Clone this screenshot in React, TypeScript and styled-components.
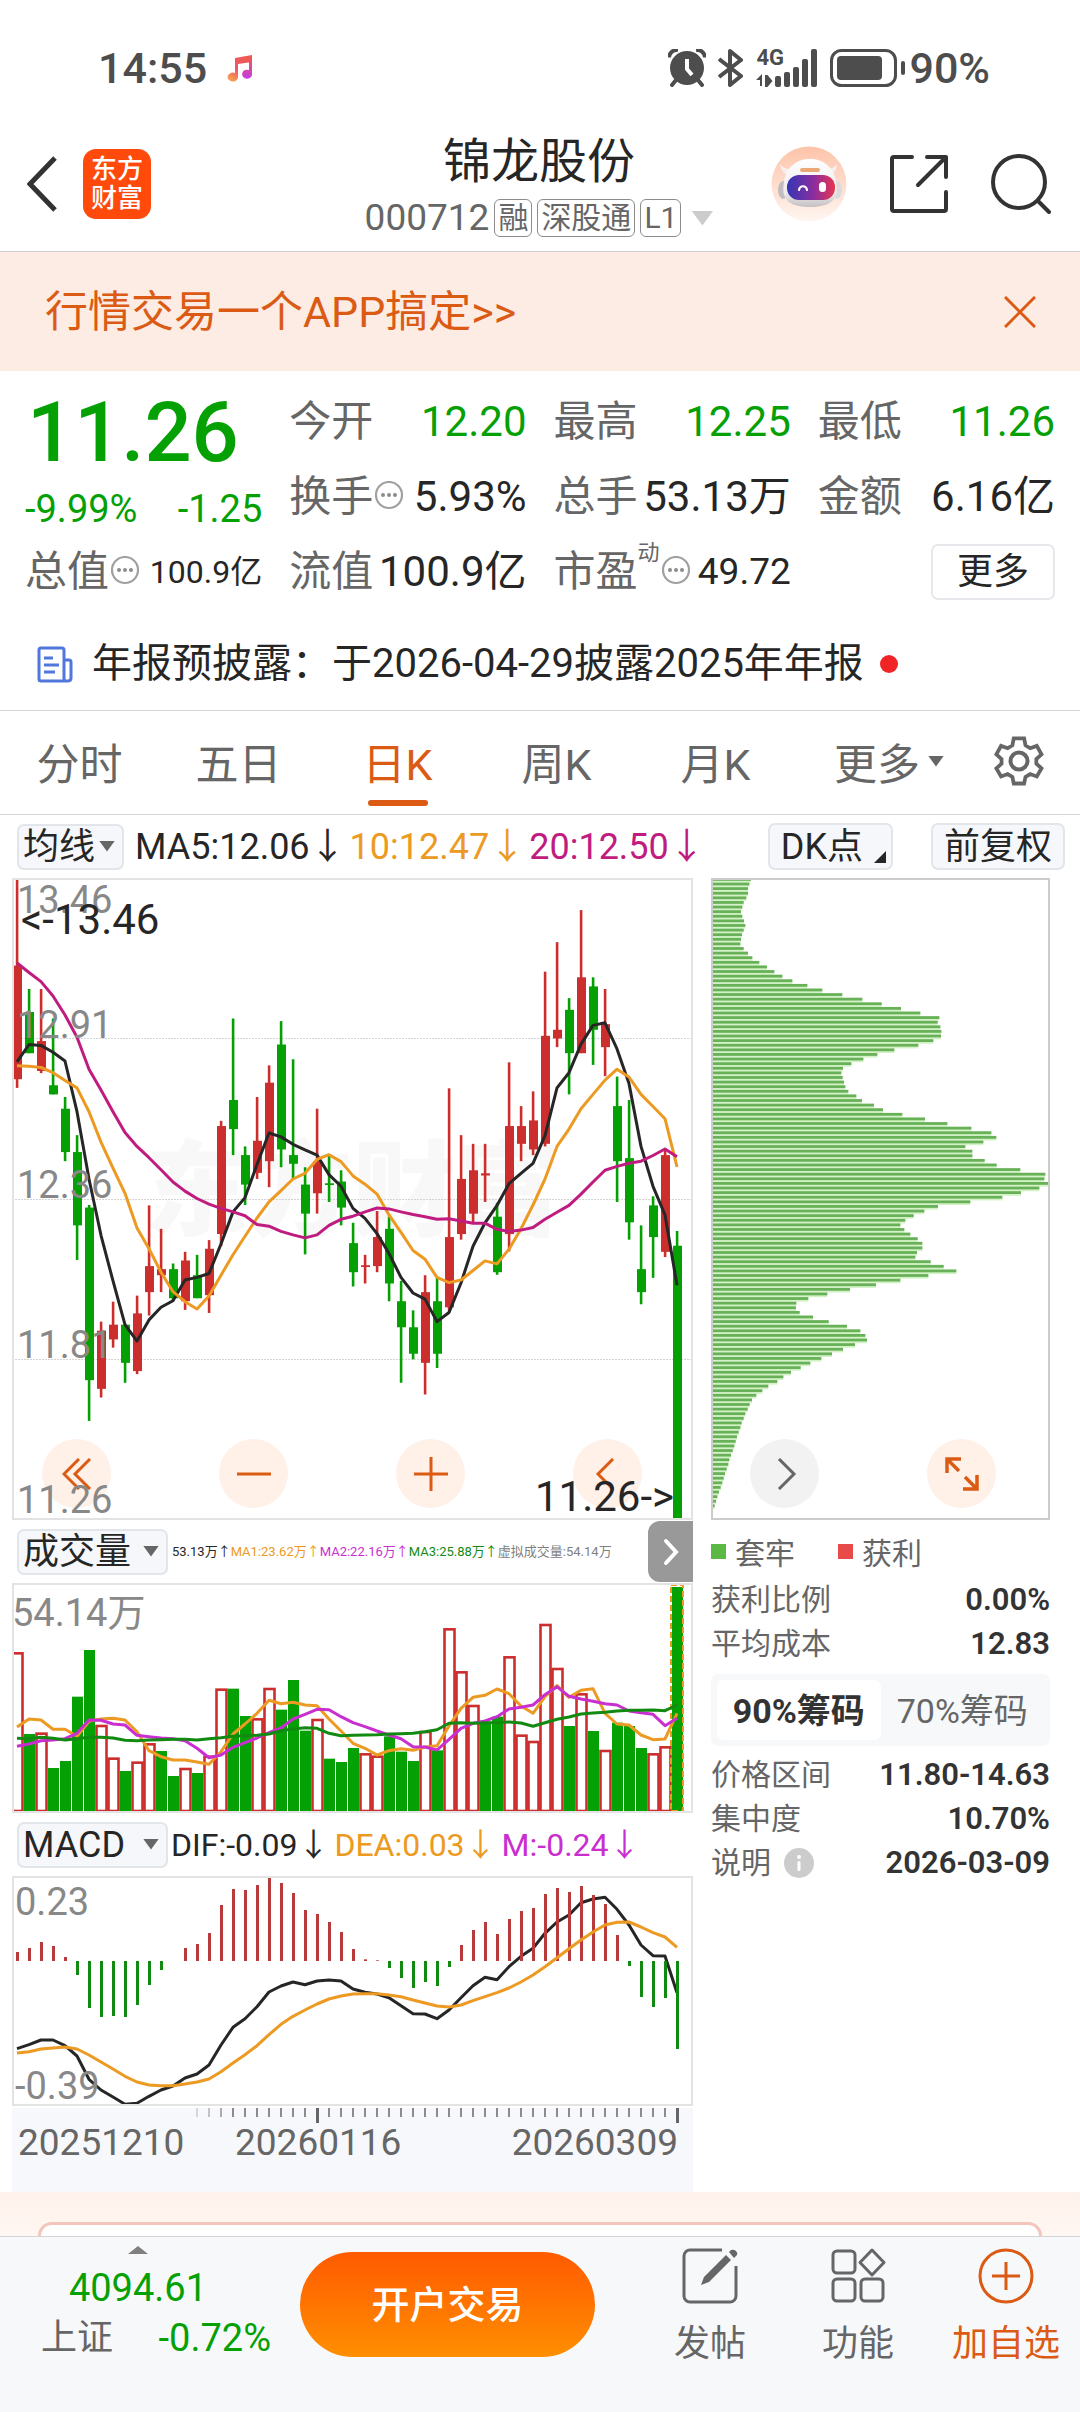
import React from "react";
import styled, { createGlobalStyle } from "styled-components";

const UP = "#cc2e2e";
const DOWN = "#04a004";
const ORANGE = "#ec9a22";
const BRAND = "#db5a14";
const MAGENTA = "#c01c80";
const PURPLE = "#c92fd0";
const INK = "#262626";
const GREY = "#666666";

const GlobalStyle = createGlobalStyle`
  *, *::before, *::after { box-sizing: border-box; }
  body { margin: 0; background: #ffffff; }
  body, button, select {
    font-family: Roboto, "Noto Sans CJK SC", sans-serif;
    color: ${INK};
  }
  button { border: 0; padding: 0; background: none; cursor: pointer; white-space: nowrap; }
  svg { display: block; flex: none; }
  dl, dd, dt, h1, p { margin: 0; font-weight: 400; }
`;

const Page = styled.div`
  display: flex;
  flex-direction: column;
  min-height: 100vh;
`;

/* ---------- status bar ---------- */
const StatusBar = styled.div`
  display: flex;
  align-items: center;
  justify-content: space-between;
  height: 110px;
  padding: 26px 90px 0 98px;
  color: #4d4d4d;
  font-size: 43px;
  font-weight: 500;
`;
const StatusGroup = styled.div<{ $gap: number }>`
  display: flex;
  align-items: center;
  gap: ${(p) => p.$gap}px;
`;
const NetworkIcon = styled.div`
  position: relative;
  display: flex;
`;
const NetworkLabel = styled.span`
  position: absolute;
  left: 0;
  top: -3px;
  font-size: 22px;
  line-height: 24px;
  font-weight: 700;
`;

/* ---------- header ---------- */
const Header = styled.header`
  display: grid;
  grid-template-columns: 1fr auto 1fr;
  align-items: center;
  height: 142px;
  padding: 0 29px 0 27px;
  border-bottom: 1px solid #d0d0d3;
`;
const HeaderSide = styled.div<{ $end?: boolean }>`
  display: flex;
  align-items: center;
  justify-content: ${(p) => (p.$end ? "flex-end" : "flex-start")};
  gap: ${(p) => (p.$end ? 42 : 26)}px;
  padding-top: 6px;
`;
const IconButton = styled.button`
  display: flex;
`;
const Logo = styled.div`
  width: 68px;
  height: 70px;
  padding-top: 6px;
  border-radius: 13px;
  background: #ff4a0b;
  color: #ffffff;
  font-size: 26px;
  line-height: 29px;
  font-weight: 500;
  text-align: center;
`;
const TitleBlock = styled.div`
  display: flex;
  flex-direction: column;
  align-items: center;
  padding-top: 15px;
`;
const Title = styled.h1`
  font-size: 48px;
  line-height: 60px;
`;
const SubTitle = styled.button`
  display: flex;
  align-items: center;
  gap: 5px;
  color: ${GREY};
  font-size: 37px;
  line-height: 52px;
`;
const Tag = styled.span`
  padding: 0 3px;
  border: 1px solid #8c8c8c;
  border-radius: 6px;
  font-size: 30px;
  line-height: 36px;
`;
const Caret = styled.span<{ $size: number; $color?: string; $up?: boolean }>`
  display: inline-block;
  flex: none;
  width: ${(p) => p.$size * 2}px;
  height: ${(p) => Math.round(p.$size * 1.4)}px;
  background: ${(p) => p.$color || GREY};
  clip-path: ${(p) => (p.$up ? "polygon(50% 0, 100% 100%, 0 100%)" : "polygon(0 0, 100% 0, 50% 100%)")};
`;
const TitleCaret = styled(Caret)`
  margin-left: 5px;
`;

/* ---------- banner ---------- */
const Banner = styled.div`
  display: flex;
  align-items: center;
  justify-content: space-between;
  height: 119px;
  padding: 0 44px 0 45px;
  background: #fcece3;
`;
const BannerLink = styled.a`
  color: ${BRAND};
  font-size: 43px;
  line-height: 60px;
  text-decoration: none;
`;

/* ---------- quote ---------- */
const Quote = styled.section`
  display: grid;
  grid-template-columns: repeat(4, 1fr);
  grid-template-rows: repeat(3, 75px);
  column-gap: 27px;
  padding: 13px 25px 9px;
`;
const PriceCell = styled.div`
  grid-row: span 2;
  color: ${DOWN};
`;
const Price = styled.div`
  padding-left: 2px;
  font-size: 83px;
  line-height: 98px;
  font-weight: 500;
`;
const Change = styled.div`
  display: flex;
  justify-content: space-between;
  font-size: 38px;
  line-height: 54px;
`;
const Cell = styled.dl`
  display: flex;
  align-items: center;
  justify-content: space-between;
  white-space: nowrap;
`;
const CellLabel = styled.dt`
  display: flex;
  align-items: center;
  color: ${GREY};
  font-size: 42px;
  line-height: 60px;
`;
const CellValue = styled.dd<{ $tone?: string; $size?: number }>`
  color: ${(p) => p.$tone || INK};
  font-size: ${(p) => p.$size || 42}px;
  line-height: 60px;
`;
const Superscript = styled.sup`
  align-self: flex-start;
  font-size: 22px;
  line-height: 22px;
`;
const MoreButton = styled.button`
  align-self: center;
  justify-self: end;
  width: 124px;
  height: 56px;
  border: 2px solid #e6e8eb;
  border-radius: 7px;
  font-size: 36px;
  line-height: 50px;
`;

/* ---------- news ---------- */
const News = styled.a`
  display: flex;
  align-items: center;
  height: 92px;
  padding-left: 37px;
  color: ${INK};
  font-size: 40px;
  line-height: 60px;
  white-space: nowrap;
  text-decoration: none;
`;
const NewsText = styled.span`
  margin: 0 16px 0 19px;
`;
const Dot = styled.span`
  width: 18px;
  height: 18px;
  border-radius: 50%;
  background: #f02424;
`;

/* ---------- tabs ---------- */
const Tabs = styled.nav`
  display: grid;
  grid-template-columns: repeat(5, 159fr) 188fr 72fr;
  height: 105px;
  padding-right: 25px;
  border-top: 1px solid #d6d6d8;
  border-bottom: 1px solid #d6d6d8;
`;
const Tab = styled.button<{ $active?: boolean }>`
  position: relative;
  display: flex;
  align-items: center;
  justify-content: center;
  gap: 8px;
  padding-bottom: 3px;
  color: ${(p) => (p.$active ? BRAND : GREY)};
  font-size: 43px;
  &::after {
    content: "";
    position: absolute;
    left: 50%;
    bottom: 8px;
    width: 60px;
    height: 6px;
    margin-left: -30px;
    border-radius: 3px;
    background: ${(p) => (p.$active ? BRAND : "transparent")};
  }
`;

/* ---------- indicator rows ---------- */
const MaRow = styled.div`
  display: flex;
  align-items: center;
  height: 63px;
  padding: 0 15px 0 17px;
`;
const SelectBox = styled.label<{ $width: number }>`
  position: relative;
  display: flex;
  align-items: center;
  width: ${(p) => p.$width}px;
  height: 46px;
  flex: none;
`;
const Select = styled.select`
  appearance: none;
  width: 100%;
  height: 100%;
  padding: 0 0 0 4px;
  border: 2px solid #e2e5e9;
  border-radius: 7px;
  background: #f6f7fa;
  font-size: 36px;
  line-height: 42px;
`;
const SelectCaret = styled(Caret)`
  position: absolute;
  right: 9px;
  top: 17px;
  pointer-events: none;
`;
const Readouts = styled.div<{ $size: number; $gap: number; $pad: number }>`
  display: flex;
  gap: ${(p) => p.$gap}px;
  padding-left: ${(p) => p.$pad}px;
  font-size: ${(p) => p.$size}px;
  line-height: 50px;
  white-space: nowrap;
`;
const Readout = styled.span<{ $color: string }>`
  color: ${(p) => p.$color};
`;
const Actions = styled.div`
  display: flex;
  gap: 38px;
  margin-left: auto;
`;
const Chip = styled.button<{ $corner?: boolean }>`
  position: relative;
  height: 47px;
  padding: 0 ${(p) => (p.$corner ? 28 : 11)}px 0 11px;
  border: 2px solid #e2e5e9;
  border-radius: 7px;
  background: #f6f7fa;
  font-size: 36px;
  line-height: 42px;
  &::after {
    content: "";
    position: absolute;
    right: 5px;
    bottom: 5px;
    width: 12px;
    height: 12px;
    background: ${(p) => (p.$corner ? INK : "transparent")};
    clip-path: polygon(100% 0, 100% 100%, 0 100%);
  }
`;
const SubRow = styled.div`
  display: flex;
  align-items: center;
  height: 63px;
  padding-left: 5px;
`;
const NextButton = styled.button`
  display: flex;
  align-items: center;
  justify-content: center;
  width: 45px;
  height: 61px;
  margin-left: auto;
  border-radius: 12px 0 0 12px;
  background: #999999;
`;

/* ---------- charts ---------- */
const Board = styled.main`
  display: grid;
  grid-template-columns: 681fr 339fr;
  column-gap: 18px;
  padding: 0 30px 0 12px;
`;
const Column = styled.div`
  min-width: 0;
`;
const Panel = styled.div<{ $height: number; $dark?: boolean }>`
  position: relative;
  height: ${(p) => p.$height}px;
  overflow: hidden;
  &::after {
    content: "";
    position: absolute;
    inset: 0;
    border: 2px solid ${(p) => (p.$dark ? "#cccccc" : "#e3e3e3")};
    pointer-events: none;
  }
`;
const Plot = styled.svg`
  position: relative;
  width: 100%;
  height: 100%;
`;
const Watermark = styled.div`
  position: absolute;
  inset: 0;
  display: flex;
  align-items: center;
  justify-content: center;
  color: #f8f8f8;
  font-size: 104px;
  line-height: 120px;
  padding-bottom: 12px;
  font-weight: 900;
`;
const AxisLabel = styled.span<{ $top: number; $left?: number }>`
  position: absolute;
  left: ${(p) => p.$left ?? 5}px;
  top: ${(p) => p.$top}px;
  color: #888888;
  font-size: 38px;
  line-height: 36px;
`;
const Callout = styled.span<{ $top: number; $right?: boolean }>`
  position: absolute;
  top: ${(p) => p.$top}px;
  ${(p) => (p.$right ? "right: 19px;" : "left: 9px;")}
  font-size: 42px;
  line-height: 40px;
`;
const RoundRow = styled.div<{ $left: number }>`
  position: absolute;
  left: ${(p) => p.$left}px;
  bottom: 12px;
  display: flex;
  gap: 108px;
`;
const Round = styled.button<{ $grey?: boolean }>`
  display: flex;
  align-items: center;
  justify-content: center;
  width: 69px;
  height: 69px;
  border-radius: 50%;
  background: ${(p) => (p.$grey ? "#f2f2f2" : "rgba(255, 238, 228, 0.86)")};
  color: ${(p) => (p.$grey ? GREY : BRAND)};
`;
const DateAxis = styled.div`
  position: relative;
  height: 84px;
  margin-top: 2px;
  background: #f7f8fb;
`;
const Ticks = styled.svg`
  width: 100%;
  height: 16px;
`;
const Dates = styled.div`
  display: grid;
  grid-template-columns: 217px 1fr auto;
  padding: 0 15px 0 6px;
  color: ${GREY};
  font-size: 37px;
  line-height: 38px;
`;

/* ---------- chip statistics ---------- */
const Legend = styled.div`
  display: flex;
  align-items: center;
  gap: 43px;
  height: 58px;
  padding-top: 4px;
  color: ${GREY};
  font-size: 30px;
`;
const LegendItem = styled.span<{ $color: string }>`
  display: flex;
  align-items: center;
  gap: 9px;
  &::before {
    content: "";
    width: 15px;
    height: 15px;
    background: ${(p) => p.$color};
  }
`;
const Stats = styled.dl``;
const Stat = styled.div`
  display: flex;
  align-items: center;
  justify-content: space-between;
  height: 44px;
  white-space: nowrap;
`;
const StatLabel = styled.dt`
  display: flex;
  align-items: center;
  gap: 13px;
  color: ${GREY};
  font-size: 30px;
  line-height: 44px;
`;
const StatValue = styled.dd`
  color: #333333;
  font-size: 31px;
  line-height: 44px;
  font-weight: 600;
`;
const Segmented = styled.div`
  display: grid;
  grid-template-columns: 1fr 1fr;
  height: 72px;
  margin: 8px 0 7px;
  padding: 6px;
  border-radius: 7px;
  background: #f7f8fa;
`;
const Segment = styled.button<{ $active?: boolean }>`
  padding-bottom: 3px;
  border-radius: 7px;
  background: ${(p) => (p.$active ? "#ffffff" : "transparent")};
  color: ${(p) => (p.$active ? "#333333" : GREY)};
  font-size: 34px;
  font-weight: ${(p) => (p.$active ? 700 : 400)};
`;

/* ---------- bottom ---------- */
const Promo = styled.div`
  flex: 1 0 44px;
  display: flex;
  padding: 30px 38px 0;
  background: linear-gradient(#fff2ec, #fff7f2);
`;
const PromoCard = styled.div`
  flex: 1;
  border: 3px solid #f4c6bb;
  border-bottom: 0;
  border-radius: 20px 20px 0 0;
  background: #ffffff;
`;
const BottomBar = styled.footer`
  display: flex;
  align-items: flex-start;
  height: 176px;
  padding: 0 0 0 26px;
  border-top: 1px solid #d3d3d8;
  background: #f7f8fa;
`;
const IndexBlock = styled.button`
  flex: 0 0 258px;
  padding: 9px 13px 0 15px;
  color: ${DOWN};
`;
const IndexHead = styled.span`
  display: flex;
  flex-direction: column;
  align-items: center;
  padding: 0 36px 0 0;
  font-size: 38px;
  line-height: 46px;
`;
const IndexCaret = styled(Caret)`
  height: 8px;
  margin-bottom: 11px;
`;
const IndexRow = styled.span`
  display: flex;
  justify-content: space-between;
  padding-top: 2px;
  font-size: 38px;
  line-height: 50px;
`;
const IndexName = styled.span`
  color: ${GREY};
  font-size: 36px;
`;
const Cta = styled.button`
  flex: 0 0 295px;
  height: 105px;
  margin: 15px 0 0 16px;
  border-radius: 53px;
  background: linear-gradient(#ff5a00, #ff8f00);
  color: #ffffff;
  font-size: 38px;
  line-height: 50px;
  font-weight: 500;
`;
const Tools = styled.nav`
  display: flex;
  justify-content: flex-end;
  flex: 1;
`;
const Tool = styled.button<{ $accent?: boolean }>`
  display: flex;
  flex-direction: column;
  align-items: center;
  width: 148px;
  padding-top: 11px;
  color: ${(p) => (p.$accent ? BRAND : GREY)};
  font-size: 36px;
  line-height: 46px;
`;
const ToolLabel = styled.span`
  padding-top: 17px;
`;

/* ---------- data ---------- */
// direction, body top, body bottom, high, low — measured downwards on a 1478-unit scale offset by 41
type Candle = [0 | 1, number, number, number, number];
const candles: Candle[] = [
  [1, 243, 505, 41, 525], [0, 350, 445, 297, 445], [1, 417, 486, 297, 491], [0, 519, 540, 365, 540],
  [0, 573, 673, 546, 694], [0, 673, 842, 634, 922], [0, 801, 1199, 795, 1293], [1, 1085, 1219, 1064, 1239],
  [1, 1071, 1105, 1018, 1124], [0, 1071, 1159, 1071, 1205], [1, 1045, 1178, 1004, 1185], [1, 936, 996, 796, 1050],
  [1, 943, 957, 850, 996], [0, 943, 1010, 930, 1017], [1, 923, 1017, 903, 1037], [0, 957, 1010, 910, 1010],
  [1, 896, 1003, 876, 1044], [1, 613, 862, 601, 890], [0, 553, 620, 365, 680], [0, 680, 748, 660, 795],
  [1, 647, 721, 546, 735], [1, 513, 694, 473, 754], [0, 425, 667, 371, 708], [0, 680, 700, 459, 735],
  [0, 748, 815, 708, 909], [1, 694, 768, 573, 815], [0, 745, 749, 680, 788], [0, 741, 801, 715, 842],
  [0, 883, 950, 836, 983], [1, 934, 938, 910, 976], [1, 869, 936, 809, 950], [0, 850, 976, 822, 1017],
  [0, 1017, 1077, 970, 1205], [0, 1077, 1138, 1038, 1151], [1, 996, 1159, 957, 1232], [0, 1017, 1138, 960, 1171],
  [1, 869, 1031, 526, 1040], [1, 735, 862, 634, 875], [1, 715, 815, 654, 835], [1, 722, 727, 654, 788],
  [0, 822, 950, 790, 956], [1, 613, 862, 466, 902], [1, 613, 654, 567, 694], [1, 600, 667, 533, 680],
  [1, 405, 654, 257, 660], [1, 391, 411, 189, 431], [0, 345, 445, 318, 540], [1, 270, 445, 115, 445],
  [0, 291, 391, 270, 472], [1, 378, 431, 297, 498], [0, 567, 694, 499, 788], [0, 687, 835, 553, 875],
  [0, 943, 996, 842, 1024], [0, 796, 869, 775, 963], [1, 680, 903, 665, 915], [0, 889, 1522, 855, 1522],
];
const ma5 = [465, 425, 427, 443, 463, 580, 735, 865, 970, 1071, 1109, 1060, 1031, 1016, 968, 962, 953, 885, 811, 778, 702, 629, 638, 655, 668, 680, 725, 752, 803, 826, 861, 907, 962, 998, 1012, 1064, 1043, 975, 890, 836, 796, 746, 722, 699, 635, 525, 490, 424, 381, 375, 435, 515, 660, 752, 818, 980];
const ma10 = [474, 475, 478, 490, 508, 525, 580, 650, 710, 768, 848, 896, 950, 995, 1018, 1035, 1005, 957, 910, 867, 825, 788, 762, 735, 722, 690, 679, 695, 728, 747, 770, 818, 858, 900, 920, 962, 974, 968, 946, 924, 931, 897, 850, 795, 735, 660, 620, 573, 540, 507, 482, 500, 540, 568, 596, 707];
const ma20 = [237, 259, 280, 313, 357, 408, 482, 530, 580, 628, 660, 686, 714, 742, 763, 780, 793, 803, 811, 820, 840, 844, 856, 864, 871, 864, 842, 828, 821, 811, 802, 804, 811, 817, 822, 828, 827, 832, 837, 837, 851, 856, 853, 847, 828, 812, 796, 770, 742, 715, 706, 699, 694, 681, 666, 684];

// bar tops on a 3-units-per-pixel scale, panel top at 249 and base line at 933
const volumes = [457, 702, 698, 804, 783, 590, 450, 675, 773, 813, 785, 730, 753, 828, 804, 819, 767, 566, 566, 648, 655, 564, 629, 540, 692, 657, 776, 786, 744, 760, 767, 709, 755, 783, 693, 751, 385, 514, 615, 665, 650, 469, 704, 723, 372, 504, 678, 580, 693, 750, 668, 678, 744, 760, 739, 261];
const volumeUpDays = new Set([0, 2, 7, 8, 10, 11, 14, 16, 17, 20, 21, 25, 29, 30, 34, 36, 37, 38, 41, 42, 43, 44, 45, 47, 49, 53, 54]);
const vol1 = [681, 657, 660, 688, 688, 709, 664, 657, 655, 660, 695, 752, 770, 780, 780, 786, 793, 755, 702, 672, 640, 601, 611, 607, 615, 617, 657, 693, 730, 745, 765, 752, 746, 751, 741, 737, 678, 625, 592, 586, 567, 581, 618, 640, 590, 557, 592, 571, 566, 640, 672, 675, 705, 719, 717, 640];
const vol2 = [739, 732, 722, 720, 716, 700, 660, 661, 672, 675, 706, 710, 714, 716, 722, 745, 773, 765, 742, 728, 714, 698, 684, 657, 643, 628, 629, 650, 668, 680, 693, 705, 716, 740, 741, 750, 718, 685, 670, 663, 650, 627, 622, 615, 584, 560, 589, 597, 604, 611, 615, 633, 638, 643, 677, 655];
const vol3 = [715, 716, 712, 715, 720, 716, 712, 712, 714, 721, 722, 720, 719, 718, 718, 720, 716, 713, 709, 707, 706, 702, 692, 687, 683, 685, 700, 707, 706, 705, 704, 702, 701, 700, 695, 689, 670, 668, 670, 668, 668, 666, 669, 679, 668, 658, 651, 642, 639, 637, 633, 631, 631, 630, 632, 615];

// same scale, panel top at 228 and zero line at 483
const macd = [456, 444, 426, 438, 471, 525, 624, 651, 648, 651, 615, 555, 510, 483, 444, 432, 399, 315, 267, 270, 255, 228, 249, 279, 330, 342, 366, 396, 447, 478, 481, 504, 534, 564, 546, 558, 501, 435, 390, 366, 402, 357, 333, 324, 282, 264, 276, 258, 285, 312, 405, 498, 591, 621, 594, 747];
const dif = [746, 734, 720, 720, 737, 768, 838, 870, 891, 913, 910, 889, 870, 858, 834, 822, 795, 735, 682, 656, 620, 576, 558, 546, 554, 543, 540, 543, 567, 577, 582, 593, 617, 641, 642, 656, 630, 593, 557, 532, 539, 500, 469, 445, 400, 366, 345, 308, 297, 292, 328, 375, 435, 467, 468, 578];
const dea = [759, 755, 747, 744, 741, 747, 765, 786, 807, 829, 846, 855, 857, 857, 852, 846, 837, 815, 789, 764, 737, 704, 673, 649, 630, 612, 597, 588, 582, 581, 581, 585, 590, 600, 609, 618, 621, 615, 602, 590, 578, 564, 546, 525, 500, 473, 446, 420, 396, 375, 367, 366, 381, 398, 411, 442];

// chip distribution, length of each price level (full width = 1018)
const chips = [182, 177, 173, 173, 168, 160, 156, 152, 156, 161, 165, 160, 155, 152, 150, 160, 173, 186, 207, 230, 252, 276, 306, 351, 396, 456, 516, 574, 632, 690, 747, 742, 750, 753, 752, 729, 684, 612, 561, 519, 483, 458, 453, 457, 461, 465, 474, 498, 515, 551, 578, 636, 704, 771, 843, 903, 918, 879, 825, 846, 846, 883, 919, 990, 1065, 1062, 1080, 1047, 992, 936, 840, 743, 702, 670, 645, 630, 642, 660, 682, 696, 696, 680, 675, 721, 760, 798, 714, 630, 557, 479, 411, 354, 318, 317, 328, 368, 415, 470, 510, 525, 530, 494, 458, 425, 393, 360, 331, 302, 279, 261, 234, 216, 198, 185, 178, 172, 165, 160, 154, 150, 145, 140, 136, 132, 127, 122, 117, 114, 109, 104, 100, 96, 91, 86, 81, 77, 73, 68].map((v) => (v - 62) / 3);

const STEP = 12;
const cx = (i: number) => 5 + i * STEP;
const priceY = (v: number) => (v - 41) / 2.306;
const line = (values: number[], toY: (v: number) => number) =>
  values.map((v, i) => `${cx(i)},${toY(v).toFixed(1)}`).join(" ");

const Curve = ({ values, toY, color }: { values: number[]; toY: (v: number) => number; color: string }) => (
  <polyline points={line(values, toY)} fill="none" stroke={color} strokeWidth="3" strokeLinejoin="round" />
);

const PriceChart = () => (
  <Panel $height={642}>
    <Watermark aria-hidden>东方财富</Watermark>
    <Plot viewBox="0 0 681 642" preserveAspectRatio="none">
      {[160, 321, 481].map((y) => (
        <line key={y} x1="0" x2="681" y1={y + 0.5} y2={y + 0.5} stroke="#d4d4d4" strokeDasharray="2 1" />
      ))}
      {candles.map(([up, top, bottom, high, low], i) => (
        <g key={i} fill={up ? UP : DOWN}>
          <rect x={cx(i) - 1.2} y={priceY(high)} width="2.6" height={priceY(low) - priceY(high)} />
          <rect x={cx(i) - 4} y={priceY(top)} width="9" height={priceY(bottom) - priceY(top)} />
        </g>
      ))}
      <Curve values={ma5} toY={priceY} color={INK} />
      <Curve values={ma10} toY={priceY} color={ORANGE} />
      <Curve values={ma20} toY={priceY} color={MAGENTA} />
    </Plot>
    <RoundRow $left={30}>
      <Round aria-label="最早">
        <svg width="30" height="32" viewBox="0 0 30 32" fill="none" stroke="currentColor" strokeWidth="3">
          <path d="M17 1L2 16l15 15M28 1L13 16l15 15" />
        </svg>
      </Round>
      <Round aria-label="缩小">
        <svg width="34" height="34" viewBox="0 0 34 34" stroke="currentColor" strokeWidth="3"><path d="M0 17h34" /></svg>
      </Round>
      <Round aria-label="放大">
        <svg width="34" height="34" viewBox="0 0 34 34" stroke="currentColor" strokeWidth="3"><path d="M0 17h34M17 0v34" /></svg>
      </Round>
      <Round aria-label="向前">
        <svg width="30" height="32" viewBox="0 0 30 32" fill="none" stroke="currentColor" strokeWidth="3">
          <path d="M20 1L5 16l15 15" />
        </svg>
      </Round>
    </RoundRow>
    <AxisLabel $top={4}>13.46</AxisLabel>
    <AxisLabel $top={129}>12.91</AxisLabel>
    <AxisLabel $top={289}>12.36</AxisLabel>
    <AxisLabel $top={449}>11.81</AxisLabel>
    <AxisLabel $top={604}>11.26</AxisLabel>
    <Callout $top={22}>&lt;-13.46</Callout>
    <Callout $top={599} $right>11.26-&gt;</Callout>
  </Panel>
);

const volumeY = (v: number) => (v - 249) / 3;
const VolumeChart = () => (
  <Panel $height={230}>
    <Plot viewBox="0 0 681 230" preserveAspectRatio="none">
      {volumes.map((v, i) => {
        const y = volumeY(v);
        if (volumeUpDays.has(i)) {
          return <rect key={i} x={cx(i) - 4.5} y={y + 1} width="10" height={227 - y} fill="#ffffff" stroke={UP} strokeWidth="2.6" />;
        }
        return <rect key={i} x={cx(i) - 5} y={y} width="11" height={228 - y} fill={DOWN} />;
      })}
      <rect x={cx(55) - 6} y="2" width="12" height="226" fill="none" stroke={ORANGE} strokeWidth="2" strokeDasharray="6 3" />
      <Curve values={vol1} toY={volumeY} color={ORANGE} />
      <Curve values={vol2} toY={volumeY} color={PURPLE} />
      <Curve values={vol3} toY={volumeY} color="#128a12" />
    </Plot>
    <AxisLabel $top={12} $left={0}>54.14万</AxisLabel>
  </Panel>
);

const macdY = (v: number) => (v - 228) / 3;
const MacdChart = () => (
  <Panel $height={230}>
    <Plot viewBox="0 0 681 230" preserveAspectRatio="none">
      <Curve values={dif} toY={macdY} color={INK} />
      {macd.map((v, i) => (
        <rect
          key={i}
          x={cx(i) - 1}
          y={Math.min(macdY(v), 85)}
          width="3"
          height={Math.abs(macdY(v) - 85)}
          fill={v < 483 ? "#b93a3a" : "#128a12"}
        />
      ))}
      <Curve values={dea} toY={macdY} color={ORANGE} />
    </Plot>
    <AxisLabel $top={8} $left={3}>0.23</AxisLabel>
    <AxisLabel $top={192} $left={3}>-0.39</AxisLabel>
  </Panel>
);

const ChipChart = () => (
  <Panel $height={642} $dark>
    <Plot viewBox="0 0 339 642" preserveAspectRatio="none">
      {chips.map((w, i) => (
        <g key={i}>
          <rect x="0" y={i * 4.606} width={w} height="4.6" fill="#d3f3c6" />
          <rect x="0" y={i * 4.606} width={w} height="2.8" fill="#69b159" />
        </g>
      ))}
    </Plot>
    <RoundRow $left={39}>
      <Round $grey aria-label="向后">
        <svg width="30" height="32" viewBox="0 0 30 32" fill="none" stroke="currentColor" strokeWidth="3">
          <path d="M9 1l15 15L9 31" />
        </svg>
      </Round>
      <Round aria-label="全屏">
        <svg width="34" height="34" viewBox="0 0 34 34" fill="none" stroke="currentColor" strokeWidth="3.5">
          <path d="M2 16V2h14M2 2l12 12M32 18v14H18M32 32L20 20" />
        </svg>
      </Round>
    </RoundRow>
  </Panel>
);

const TickMarks = () => (
  <Ticks viewBox="0 0 681 16" preserveAspectRatio="none">
    {candles.map((_, i) => {
      const major = i === 25 || i === 55;
      if (i < 15) return null;
      return (
        <rect
          key={i}
          x={cx(i) - 1}
          y="0"
          width={major ? 3 : 2}
          height={major ? 15 : 9}
          fill={major ? "#666666" : "#8c8c8c"}
          opacity={i < 18 ? 0.3 + (i - 15) * 0.2 : 1}
        />
      );
    })}
  </Ticks>
);

const Ellipsis = () => (
  <svg width="32" height="32" viewBox="0 0 32 32" role="img" aria-label="说明">
    <circle cx="16" cy="14" r="13" fill="none" stroke="#a0a0a0" strokeWidth="2.2" />
    <g fill="#8c8c8c"><circle cx="10" cy="14" r="2" /><circle cx="16" cy="14" r="2" /><circle cx="22" cy="14" r="2" /></g>
  </svg>
);

const MusicNote = () => (
  <svg width="26" height="28" viewBox="0 0 26 28">
    <defs>
      <linearGradient id="note" x1="0" y1="1" x2="0.7" y2="0">
        <stop offset="0" stopColor="#f8b24a" />
        <stop offset="0.5" stopColor="#f0566a" />
        <stop offset="1" stopColor="#ee5a4e" />
      </linearGradient>
      <linearGradient id="noteEnd" x1="0" y1="0" x2="0" y2="1">
        <stop offset="0" stopColor="#ee5a4e" />
        <stop offset="1" stopColor="#c53be8" />
      </linearGradient>
    </defs>
    <path d="M8 4L25 1v7L11 10v13a5.200 4.500 0 1 1-3-4z" fill="url(#note)" />
    <path d="M22 4l3-1v18a5 4.500 0 1 1-3-5z" fill="url(#noteEnd)" />
  </svg>
);

const AlarmIcon = () => (
  <svg width="38" height="38" viewBox="0 0 38 38">
    <circle cx="19" cy="19" r="17" fill="#4d4d4d" />
    <path d="M1 8.500A8 8 0 0 1 10 1M28 1a8 8 0 0 1 9 7.500" fill="none" stroke="#4d4d4d" strokeWidth="4" />
    <path d="M8 31l-4 5M30 31l4 5" stroke="#4d4d4d" strokeWidth="4" strokeLinecap="round" />
    <path d="M19 10v10l5 6" fill="none" stroke="#ffffff" strokeWidth="4" />
  </svg>
);

const BluetoothIcon = () => (
  <svg width="26" height="38" viewBox="0 0 26 38" fill="none" stroke="#4d4d4d" strokeWidth="4" strokeLinejoin="round">
    <path d="M1 10l22 17-11 9V2l11 9L1 28" />
  </svg>
);

const SignalIcon = () => (
  <svg width="62" height="38" viewBox="0 0 62 38" fill="#4d4d4d">
    <path d="M0 31l6-6v12H4v-6zM9 26h2.500l5 6-5 6H9z" />
    <rect x="19" y="27" width="6" height="11" rx="2" />
    <rect x="28" y="23" width="6" height="15" rx="2" />
    <rect x="37" y="18" width="6" height="20" rx="2" />
    <rect x="46" y="10" width="6" height="28" rx="2" />
    <rect x="55" y="0" width="6" height="38" rx="2" />
  </svg>
);

const BatteryIcon = () => (
  <svg width="76" height="38" viewBox="0 0 76 38">
    <rect x="1.500" y="1.500" width="64" height="35" rx="10" fill="none" stroke="#4d4d4d" strokeWidth="3" />
    <rect x="7" y="7" width="45" height="24" rx="4" fill="#4d4d4d" />
    <rect x="71" y="12" width="4" height="14" rx="2" fill="#4d4d4d" />
  </svg>
);

const RobotIcon = () => (
  <svg width="76" height="76" viewBox="0 0 76 76">
    <defs>
      <linearGradient id="halo" x1="0" y1="0" x2="0" y2="1">
        <stop offset="0" stopColor="#fdc3a8" />
        <stop offset="1" stopColor="#fff6f1" />
      </linearGradient>
      <linearGradient id="visor">
        <stop offset="0" stopColor="#3436b4" />
        <stop offset="0.55" stopColor="#8a2da0" />
        <stop offset="1" stopColor="#e8364d" />
      </linearGradient>
      <linearGradient id="shell" x1="0" y1="0" x2="0" y2="1">
        <stop offset="0" stopColor="#ffffff" />
        <stop offset="0.7" stopColor="#efebec" />
        <stop offset="1" stopColor="#c4bfc2" />
      </linearGradient>
    </defs>
    <circle cx="38" cy="38" r="37.500" fill="url(#halo)" />
    <ellipse cx="12" cy="44" rx="5" ry="9" fill="#c2bdc0" />
    <ellipse cx="66" cy="44" rx="5" ry="9" fill="#dedadc" />
    <path d="M9 18c1 8 5 11 10 10l5-6c-6 2-11 1-15-4zM66 18c-1 8-4 11-9 10l-5-6c6 2 10 1 14-4z" fill="#f7efed" />
    <path d="M13 36C15 21 26 13 39 13s24 8 26 23c3 16-3 25-26 25S10 52 13 36z" fill="url(#shell)" />
    <rect x="29" y="22" width="20" height="4" rx="2" fill="#e8a877" />
    <rect x="16" y="29" width="48" height="25" rx="12" fill="url(#visor)" />
    <path d="M28 44c1-5 7-5 8 0" fill="none" stroke="#ffffff" strokeWidth="2.200" strokeLinecap="round" />
    <rect x="48" y="36" width="7" height="10" rx="3.500" fill="#ffffff" />
  </svg>
);

const GearIcon = () => (
  <svg width="52" height="52" viewBox="0 0 52 52" fill="none" stroke={GREY} strokeWidth="4">
    <path d="M20.500 2h11l1.500 7.500 5 3 7-2.500 5 9-5.500 5v5l5.500 5-5 8.500-7-2.500-5 3L31.500 50h-11L19 43l-5-3-7 2.500L2 34l5.500-5v-5L2 19l5-9 7 2.500 5-3z" transform="translate(1.500 1.500) scale(.94)" />
    <circle cx="26" cy="26" r="8.500" />
  </svg>
);

const NewsIcon = () => (
  <svg width="36" height="37" viewBox="0 0 36 37" fill="none" stroke="#5177dc" strokeWidth="3">
    <path d="M31 35H4a2 2 0 0 1-2-2V4a2 2 0 0 1 2-2h21a2 2 0 0 1 2 2v29q0 2 3.500 2T34 32V16q0-2-2-2h-5" />
    <path d="M7 12h9M7 19h15M7 26h11" />
  </svg>
);

const indicatorSelect = (name: string, options: string[], width: number) => (
  <SelectBox $width={width}>
    <Select aria-label={name} defaultValue={options[0]}>
      {options.map((o) => <option key={o}>{o}</option>)}
    </Select>
    <SelectCaret $size={8} />
  </SelectBox>
);

const cells = [
  { label: "今开", value: "12.20", tone: DOWN },
  { label: "最高", value: "12.25", tone: DOWN },
  { label: "最低", value: "11.26", tone: DOWN },
  { label: "换手", value: "5.93%", hint: true },
  { label: "总手", value: "53.13万" },
  { label: "金额", value: "6.16亿" },
  { label: "总值", value: "100.9亿", hint: true, size: 32 },
  { label: "流值", value: "100.9亿" },
  { label: "市盈", sup: "动", value: "49.72", hint: true, size: 37 },
];

export default function App() {
  return (
    <Page>
      <GlobalStyle />
      <StatusBar>
        <StatusGroup $gap={20}>
          <span>14:55</span>
          <MusicNote />
        </StatusGroup>
        <StatusGroup $gap={12}>
          <AlarmIcon />
          <BluetoothIcon />
          <NetworkIcon>
            <NetworkLabel>4G</NetworkLabel>
            <SignalIcon />
          </NetworkIcon>
          <StatusGroup $gap={3}>
            <BatteryIcon />
            <span>90%</span>
          </StatusGroup>
        </StatusGroup>
      </StatusBar>

      <Header>
        <HeaderSide>
          <IconButton aria-label="返回">
            <svg width="30" height="56" viewBox="0 0 30 56" fill="none" stroke="#333333" strokeWidth="5">
              <path d="M28 2L3 28l25 26" />
            </svg>
          </IconButton>
          <Logo>东方<br />财富</Logo>
        </HeaderSide>
        <TitleBlock>
          <Title>锦龙股份</Title>
          <SubTitle>
            000712
            <Tag>融</Tag>
            <Tag>深股通</Tag>
            <Tag>L1</Tag>
            <TitleCaret $size={11} $color="#cccccc" />
          </SubTitle>
        </TitleBlock>
        <HeaderSide $end>
          <IconButton aria-label="助手"><RobotIcon /></IconButton>
          <IconButton aria-label="分享">
            <svg width="60" height="60" viewBox="0 0 60 60" fill="none" stroke="#333333" strokeWidth="4" strokeLinecap="round" strokeLinejoin="round">
              <path d="M23 3H5a2 2 0 0 0-2 2v50a2 2 0 0 0 2 2h50a2 2 0 0 0 2-2V38M38 3h19v20M57 3L29 31" />
            </svg>
          </IconButton>
          <IconButton aria-label="搜索">
            <svg width="60" height="60" viewBox="0 0 60 60" fill="none" stroke="#333333" strokeWidth="4" strokeLinecap="round">
              <circle cx="28" cy="28" r="26" />
              <path d="M47 47l11 11" />
            </svg>
          </IconButton>
        </HeaderSide>
      </Header>

      <Banner>
        <BannerLink href="#open">行情交易一个APP搞定&gt;&gt;</BannerLink>
        <IconButton aria-label="关闭">
          <svg width="32" height="32" viewBox="0 0 32 32" stroke={BRAND} strokeWidth="3"><path d="M1 1l30 30M31 1L1 31" /></svg>
        </IconButton>
      </Banner>

      <Quote>
        <PriceCell>
          <Price>11.26</Price>
          <Change><span>-9.99%</span><span>-1.25</span></Change>
        </PriceCell>
        {cells.map((c) => (
          <Cell key={c.label}>
            <CellLabel>
              {c.label}
              {c.sup && <Superscript>{c.sup}</Superscript>}
              {c.hint && <Ellipsis />}
            </CellLabel>
            <CellValue $tone={c.tone} $size={c.size}>{c.value}</CellValue>
          </Cell>
        ))}
        <MoreButton>更多</MoreButton>
      </Quote>

      <News href="#news">
        <NewsIcon />
        <NewsText>年报预披露：于2026-04-29披露2025年年报</NewsText>
        <Dot />
      </News>

      <Tabs>
        <Tab>分时</Tab>
        <Tab>五日</Tab>
        <Tab $active>日K</Tab>
        <Tab>周K</Tab>
        <Tab>月K</Tab>
        <Tab>更多<Caret $size={8} /></Tab>
        <Tab aria-label="设置"><GearIcon /></Tab>
      </Tabs>

      <MaRow>
        {indicatorSelect("主图指标", ["均线", "BOLL"], 107)}
        <Readouts $size={36} $gap={4} $pad={11}>
          <Readout $color={INK}>MA5:12.06↓</Readout>
          <Readout $color={ORANGE}>10:12.47↓</Readout>
          <Readout $color={MAGENTA}>20:12.50↓</Readout>
        </Readouts>
        <Actions>
          <Chip $corner>DK点</Chip>
          <Chip>前复权</Chip>
        </Actions>
      </MaRow>

      <Board>
        <Column>
          <PriceChart />
          <SubRow>
            {indicatorSelect("副图指标一", ["成交量", "成交额"], 151)}
            <Readouts $size={13} $gap={0} $pad={4}>
              <Readout $color={INK}>53.13万↑</Readout>
              <Readout $color={ORANGE}>MA1:23.62万↑</Readout>
              <Readout $color={PURPLE}>MA2:22.16万↑</Readout>
              <Readout $color="#128a12">MA3:25.88万↑</Readout>
              <Readout $color="#808080">虚拟成交量:54.14万</Readout>
            </Readouts>
            <NextButton aria-label="更多指标">
              <svg width="16" height="28" viewBox="0 0 16 28" fill="none" stroke="#ffffff" strokeWidth="4" strokeLinecap="round">
                <path d="M3 3l10 11L3 25" />
              </svg>
            </NextButton>
          </SubRow>
          <VolumeChart />
          <SubRow>
            {indicatorSelect("副图指标二", ["MACD", "KDJ"], 151)}
            <Readouts $size={32} $gap={5} $pad={3}>
              <Readout $color={INK}>DIF:-0.09↓</Readout>
              <Readout $color={ORANGE}>DEA:0.03↓</Readout>
              <Readout $color={PURPLE}>M:-0.24↓</Readout>
            </Readouts>
          </SubRow>
          <MacdChart />
          <DateAxis>
            <TickMarks />
            <Dates>
              <span>20251210</span>
              <span>20260116</span>
              <span>20260309</span>
            </Dates>
          </DateAxis>
        </Column>

        <Column>
          <ChipChart />
          <Legend>
            <LegendItem $color="#5bb845">套牢</LegendItem>
            <LegendItem $color="#e84a4a">获利</LegendItem>
          </Legend>
          <Stats>
            <Stat><StatLabel>获利比例</StatLabel><StatValue>0.00%</StatValue></Stat>
            <Stat><StatLabel>平均成本</StatLabel><StatValue>12.83</StatValue></Stat>
          </Stats>
          <Segmented>
            <Segment $active>90%筹码</Segment>
            <Segment>70%筹码</Segment>
          </Segmented>
          <Stats>
            <Stat><StatLabel>价格区间</StatLabel><StatValue>11.80-14.63</StatValue></Stat>
            <Stat><StatLabel>集中度</StatLabel><StatValue>10.70%</StatValue></Stat>
            <Stat>
              <StatLabel>
                说明
                <svg width="30" height="30" viewBox="0 0 30 30" role="img" aria-label="提示">
                  <circle cx="15" cy="15" r="15" fill="#cccccc" />
                  <circle cx="15" cy="9" r="2" fill="#ffffff" />
                  <rect x="13.500" y="13" width="3" height="10" rx="1.500" fill="#ffffff" />
                </svg>
              </StatLabel>
              <StatValue>2026-03-09</StatValue>
            </Stat>
          </Stats>
        </Column>
      </Board>

      <Promo><PromoCard /></Promo>

      <BottomBar>
        <IndexBlock>
          <IndexHead>
            <IndexCaret $size={10} $color="#808080" $up />
            4094.61
          </IndexHead>
          <IndexRow><IndexName>上证</IndexName><span>-0.72%</span></IndexRow>
        </IndexBlock>
        <Cta>开户交易</Cta>
        <Tools>
          <Tool>
            <svg width="56" height="56" viewBox="0 0 56 56" fill="none" stroke="currentColor" strokeWidth="3">
              <path d="M40 2H8a6 6 0 0 0-6 6v40a6 6 0 0 0 6 6h40a6 6 0 0 0 6-6V18" />
              <path d="M19 37l3-8L44 7l5 5-22 22zM47 4l2-2q3-1 5 1t1 4l-3 3z" fill="currentColor" stroke="none" />
            </svg>
            <ToolLabel>发帖</ToolLabel>
          </Tool>
          <Tool>
            <svg width="56" height="56" viewBox="0 0 56 56" fill="none" stroke="currentColor" strokeWidth="3" strokeLinejoin="round">
              <rect x="3" y="3" width="22" height="22" rx="4" />
              <rect x="3" y="31" width="22" height="22" rx="4" />
              <rect x="31" y="31" width="22" height="22" rx="4" />
              <path d="M42 2l12 12.500L42 27 30 14.500z" />
            </svg>
            <ToolLabel>功能</ToolLabel>
          </Tool>
          <Tool $accent>
            <svg width="56" height="56" viewBox="0 0 56 56" fill="none" stroke="currentColor" strokeWidth="3">
              <circle cx="28" cy="28" r="26" />
              <path d="M14 28h28M28 14v28" />
            </svg>
            <ToolLabel>加自选</ToolLabel>
          </Tool>
        </Tools>
      </BottomBar>
    </Page>
  );
}
